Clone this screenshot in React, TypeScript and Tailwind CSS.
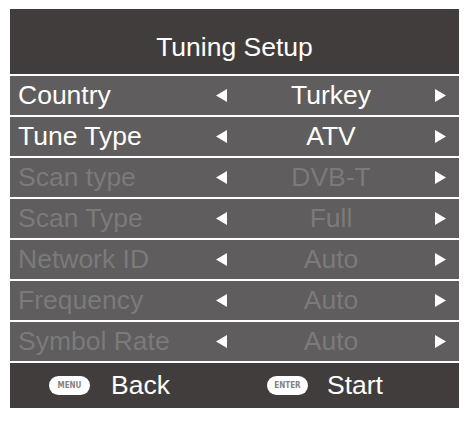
type Row = {
  label: string
  value: string
  enabled: boolean
}

const rows: Row[] = [
  { label: 'Country', value: 'Turkey', enabled: true },
  { label: 'Tune Type', value: 'ATV', enabled: true },
  { label: 'Scan type', value: 'DVB-T', enabled: false },
  { label: 'Scan Type', value: 'Full', enabled: false },
  { label: 'Network ID', value: 'Auto', enabled: false },
  { label: 'Frequency', value: 'Auto', enabled: false },
  { label: 'Symbol Rate', value: 'Auto', enabled: false },
]

function Arrow({ dir }: { dir: 'left' | 'right' }) {
  return (
    <svg viewBox="0 0 11 13" className="block h-[13px] w-[11px]">
      <polygon
        points={dir === 'left' ? '11,0 11,13 0,6.5' : '0,0 0,13 11,6.5'}
        fill="#ffffff"
      />
    </svg>
  )
}

function Pill({ text }: { text: string }) {
  return (
    <div className="flex h-[19px] w-[41px] items-center justify-center rounded-full bg-white">
      <span className="font-[family-name:'DejaVu_Sans_Condensed',sans-serif] text-[8px] font-bold leading-none text-[#858383]">
        {text}
      </span>
    </div>
  )
}

export default function App() {
  return (
    <div className="min-h-[423px] bg-white pl-[10px] pt-[9px] font-[family-name:'Liberation_Sans',Arial,sans-serif]">
      <div className="w-[449px]">
        {/* Title */}
        <div className="h-[65px] bg-[#413d3d] pt-[25px] text-center text-[26.5px] leading-none text-white">
          Tuning Setup
        </div>

        {/* Setting rows */}
        {rows.map((r) => (
          <div
            key={r.label}
            className="grid h-[41px] grid-cols-[206px_11px_208px_11px_13px] items-center border-t-2 border-white bg-[#5f5d5d] text-[26.5px] leading-none"
          >
            <span className={'pl-2 ' + (r.enabled ? 'text-white' : 'text-[#7c7a7a]')}>
              {r.label}
            </span>
            <Arrow dir="left" />
            <span className={'text-center ' + (r.enabled ? 'text-white' : 'text-[#7c7a7a]')}>
              {r.value}
            </span>
            <Arrow dir="right" />
            <span />
          </div>
        ))}

        {/* Footer */}
        <div className="flex h-[47px] items-center border-t-2 border-white bg-[#413d3d] pl-[39px] text-[26.5px] leading-none text-white">
          <div className="flex w-[218px] items-center gap-[21px]">
            <Pill text="MENU" />
            <span>Back</span>
          </div>
          <div className="flex items-center gap-[19px]">
            <Pill text="ENTER" />
            <span>Start</span>
          </div>
        </div>
      </div>
    </div>
  )
}
